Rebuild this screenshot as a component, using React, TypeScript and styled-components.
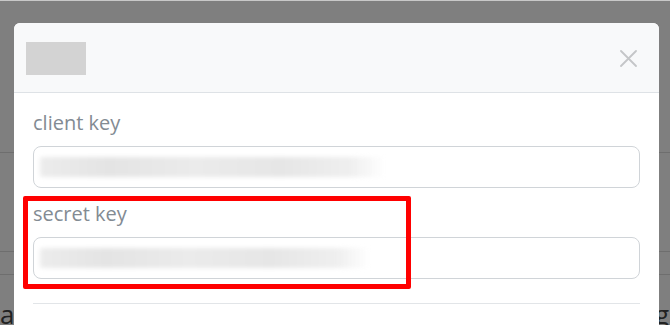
import React from "react";
import styled, { createGlobalStyle } from "styled-components";

const Global = createGlobalStyle`
  html, body { margin: 0; padding: 0; }
  body {
    width: 670px;
    height: 325px;
    overflow: hidden;
    background: #ffffff;
    font-family: "Open Sans", "Noto Sans", sans-serif;
  }
`;

const Page = styled.div`
  position: relative;
  width: 670px;
  height: 325px;
  overflow: hidden;
  border-top: 1px solid #c8c8c8;
  box-sizing: border-box;
`;

const BgRow = styled.div<{ $h: number }>`
  height: ${(p) => p.$h}px;
  border-bottom: 1px solid #dcdcdc;
  box-sizing: border-box;
`;

const BgText = styled.div`
  display: flex;
  justify-content: space-between;
  padding: 24px 1px 0 0;
  font-family: "Open Sans", sans-serif;
  font-size: 26px;
  line-height: 30px;
  color: #444;
`;

const Overlay = styled.div`
  position: absolute;
  inset: 0;
  background: rgba(0, 0, 0, 0.5);
  padding: 22px 0 0 14px;
  box-sizing: border-box;
`;

const Modal = styled.div`
  width: 645px;
  background: #ffffff;
  border-radius: 6px 6px 0 0;
  overflow: hidden;
`;

const Header = styled.div`
  height: 69px;
  background: #f8f9fa;
  border-bottom: 1px solid #dee2e6;
  display: flex;
  align-items: center;
  justify-content: space-between;
  padding: 0 22px 0 12px;
`;

const TitlePlaceholder = styled.div`
  width: 60px;
  height: 33px;
  background: #d3d3d3;
  margin-top: 1px;
`;

const CloseButton = styled.button`
  width: 17px;
  height: 17px;
  padding: 0;
  border: 0;
  background: none;
  display: flex;
  margin-top: 2px;
`;

const Body = styled.div`
  padding: 15px 19px 60px 19px;
`;

const FieldGroup = styled.div<{ $gap?: number }>`
  position: relative;
  margin-top: ${(p) => p.$gap ?? 0}px;
`;

const Label = styled.label`
  display: block;
  font-size: 20px;
  line-height: 30px;
  color: #838b93;
  margin-bottom: 8px;
`;

const InputBox = styled.div`
  height: 42px;
  border: 1px solid #d0d4d8;
  border-radius: 8px;
  box-sizing: border-box;
  display: flex;
  align-items: center;
  padding-left: 6px;
  width: 607px;
`;

const Blurred = styled.div<{ $w: number }>`
  width: ${(p) => p.$w}px;
  height: 20px;
  background: linear-gradient(
    90deg,
    #ececec 0%,
    #e4e4e4 20%,
    #ebebeb 45%,
    #e6e6e6 70%,
    #efefef 90%,
    rgba(245, 245, 245, 0) 100%
  );
  filter: blur(2px);
  border-radius: 3px;
`;

const Highlight = styled.div`
  position: absolute;
  left: -10px;
  top: -3px;
  width: 388px;
  height: 93px;
  border: 5px solid #ff0000;
  border-radius: 2px;
  box-sizing: border-box;
  pointer-events: none;
`;

const Divider = styled.hr`
  margin: 24px 0 0 0;
  width: 607px;
  border: 0;
  border-top: 1px solid #e2e5e8;
`;

export default function App() {
  return (
    <>
      <Global />
      <Page>
        <BgRow $h={152} />
        <BgRow $h={99} />
        <BgRow $h={23} />
        <BgText>
          <span>a</span>
          <span>g</span>
        </BgText>
        <Overlay>
          <Modal>
            <Header>
              <TitlePlaceholder />
              <CloseButton aria-label="close">
                <svg width="17" height="17" viewBox="0 0 17 17">
                  <path
                    d="M1 1 L16 16 M16 1 L1 16"
                    stroke="#c4c6c8"
                    strokeWidth="1.8"
                    strokeLinecap="round"
                  />
                </svg>
              </CloseButton>
            </Header>
            <Body>
              <FieldGroup>
                <Label>client key</Label>
                <InputBox>
                  <Blurred $w={345} />
                </InputBox>
              </FieldGroup>
              <FieldGroup $gap={11}>
                <Label>secret key</Label>
                <InputBox>
                  <Blurred $w={330} />
                </InputBox>
                <Highlight />
              </FieldGroup>
              <Divider />
            </Body>
          </Modal>
        </Overlay>
      </Page>
    </>
  );
}
